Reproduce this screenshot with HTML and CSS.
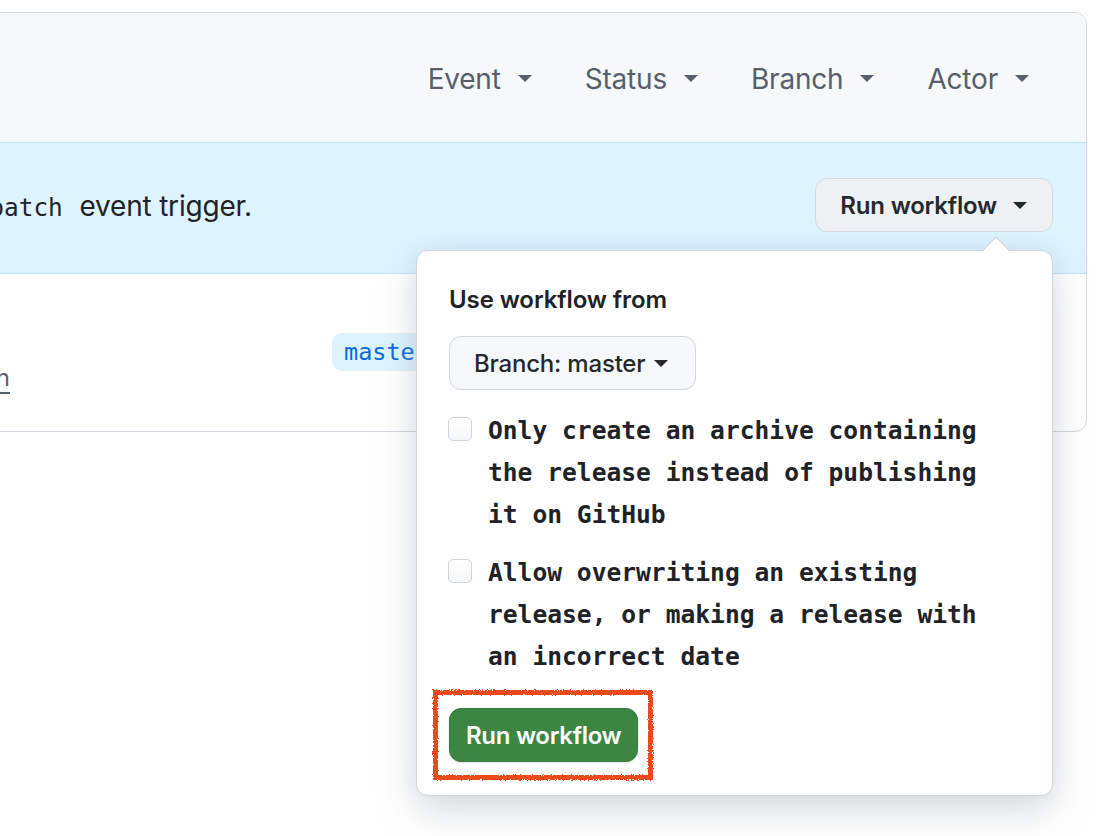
FILE: index.html
```html
<!DOCTYPE html>
<html lang="en">
<head>
<meta charset="utf-8">
<title>Run workflow</title>
<link rel="stylesheet" href="styles.css">
</head>
<body>
<div class="page">
  <div class="box">
    <div class="box-header">
      <div class="filter">Event <span class="caret"></span></div>
      <div class="filter">Status <span class="caret"></span></div>
      <div class="filter">Branch <span class="caret"></span></div>
      <div class="filter">Actor <span class="caret"></span></div>
    </div>
    <div class="banner">
      <div class="banner-msg">
        <span class="banner-text">This workflow has a <code class="code">workflow_dispatch</code> event trigger.</span>
      </div>
      <button class="btn btn-run">Run workflow <span class="caret caret-dark"></span></button>
    </div>
    <div class="run-row">
      <div class="run-left">
        <div class="run-title">Publish release</div>
        <div class="run-meta"><span class="run-link">Manually run by admin</span></div>
      </div>
      <span class="branch-tag">master</span>
    </div>
  </div>

  <div class="popover">
    <div class="pop-title">Use workflow from</div>
    <button class="btn btn-branch">Branch: master <span class="caret caret-dark"></span></button>
    <label class="check-item">
      <span class="checkbox"></span>
      <span class="check-label">Only create an archive containing the release instead of publishing it on GitHub</span>
    </label>
    <label class="check-item">
      <span class="checkbox"></span>
      <span class="check-label">Allow overwriting an existing release, or making a release with an incorrect date</span>
    </label>
    <button class="btn btn-primary">Run workflow</button>
  </div>

  <svg class="highlight" width="230" height="100" viewBox="0 0 230 100" aria-hidden="true">
    <defs>
      <filter id="rough" x="-10%" y="-10%" width="120%" height="120%">
        <feTurbulence type="fractalNoise" baseFrequency="0.9" numOctaves="2" seed="3" result="n"/>
        <feDisplacementMap in="SourceGraphic" in2="n" scale="3.5"/>
      </filter>
    </defs>
    <rect x="7.5" y="7.5" width="215" height="85" fill="none" stroke="#ec4a1c" stroke-width="5" filter="url(#rough)"/>
  </svg>
</div>
</body>
</html>
```

FILE: styles.css
```css
* { box-sizing: border-box; }

html, body {
  margin: 0;
  padding: 0;
  background: #ffffff;
  overflow: hidden;
}

body {
  font-family: Inter, "Noto Sans", "Liberation Sans", sans-serif;
  color: #1f2328;
  width: 1120px;
  height: 836px;
}

.page {
  position: relative;
  width: 1120px;
  height: 836px;
  padding-top: 12px;
}

.box {
  margin-left: -20px;
  width: 1107px;
  border: 1px solid #d0d7de;
  border-radius: 12px;
  background: #ffffff;
}

.box-header {
  height: 129px;
  background: #f6f8fa;
  border-radius: 11px 11px 0 0;
  display: flex;
  justify-content: flex-end;
  align-items: center;
  gap: 53px;
  padding: 2px 57px 0 0;
}

.filter {
  display: flex;
  align-items: center;
  gap: 17px;
  font-size: 28px;
  color: #57606a;
  letter-spacing: -0.2px;
}

.caret {
  display: inline-block;
  width: 0;
  height: 0;
  border-top: 7px solid #57606a;
  border-left: 7px solid transparent;
  border-right: 7px solid transparent;
}

.caret-dark { border-top-color: #24292f; }

.banner {
  height: 132px;
  background: #ddf4ff;
  border-top: 1px solid #b6e3ff;
  border-bottom: 1px solid #b6e3ff;
  display: flex;
  justify-content: space-between;
  align-items: flex-start;
  padding: 35px 33px 0 0;
}

.banner-msg {
  width: 271px;
  flex: 0 0 auto;
  display: flex;
  justify-content: flex-end;
  padding-top: 11px;
}

.banner-text {
  white-space: nowrap;
  font-size: 28px;
  color: #1f2328;
  flex: 0 0 auto;
  letter-spacing: -0.2px;
}

.code {
  font-family: "DejaVu Sans Mono", "Liberation Mono", monospace;
  font-size: 24.4px;
  padding: 0 9px 0 6px;
  letter-spacing: 0;
}

.btn {
  font-family: Inter, "Noto Sans", "Liberation Sans", sans-serif;
  display: inline-flex;
  align-items: center;
  height: 54px;
  border-radius: 12px;
  font-size: 24px;
  font-weight: 600;
  letter-spacing: -0.2px;
  cursor: pointer;
}

.btn-run {
  background: #eef1f4;
  border: 1.5px solid #d3d9df;
  color: #24292f;
  padding: 0 25px 0 24px;
  gap: 16px;
}

.run-row {
  height: 157px;
  display: flex;
  align-items: flex-start;
  border-radius: 0 0 11px 11px;
}

.run-left {
  width: 29px;
  flex: 0 0 auto;
  display: flex;
  flex-direction: column;
  align-items: flex-end;
  padding-top: 48px;
}

.run-title {
  white-space: nowrap;
  font-size: 27px;
  font-weight: 600;
  color: transparent;
  line-height: 40px;
  margin-right: 400px;
}

.run-meta {
  white-space: nowrap;
  font-size: 24px;
  color: #57606a;
  line-height: 32px;
}

.run-link {
  text-decoration: underline;
  text-underline-offset: 6px;
}

.branch-tag {
  margin-left: 322px;
  margin-top: 59px;
  height: 38px;
  line-height: 38px;
  padding: 0 12px;
  border-radius: 10px;
  background: #ddf4ff;
  color: #0969da;
  font-family: "DejaVu Sans Mono", "Liberation Mono", monospace;
  font-size: 23.5px;
}

.popover {
  position: absolute;
  left: 416px;
  top: 250px;
  width: 637px;
  background: #ffffff;
  border: 1px solid #d0d7de;
  border-radius: 12px;
  box-shadow: 0 16px 40px rgba(140, 149, 159, 0.32), 0 0 18px rgba(140, 149, 159, 0.12);
  padding: 31px 32px 33px 32px;
  display: flex;
  flex-direction: column;
  align-items: flex-start;
}

.popover::before,
.popover::after {
  content: "";
  position: absolute;
  width: 0;
  height: 0;
  border-left: 14px solid transparent;
  border-right: 14px solid transparent;
}

.popover::before {
  left: 565px;
  top: -15px;
  border-bottom: 14px solid #d0d7de;
}

.popover::after {
  left: 566px;
  top: -13px;
  border-left-width: 13px;
  border-right-width: 13px;
  border-bottom: 13px solid #ffffff;
}

.pop-title {
  font-size: 24px;
  font-weight: 600;
  line-height: 36px;
  letter-spacing: -0.1px;
  color: #1f2328;
  margin-bottom: 18px;
}

.btn-branch {
  background: #f6f8fa;
  border: 1.5px solid #d0d7de;
  color: #24292f;
  font-weight: 500;
  padding: 0 27px 0 24px;
  gap: 9px;
  margin-bottom: 20px;
}

.check-item {
  display: flex;
  align-items: flex-start;
  gap: 16px;
  margin-bottom: 16px;
}

.check-item + .check-item { margin-bottom: 30px; }

.checkbox {
  flex: 0 0 auto;
  width: 24px;
  height: 24px;
  margin-top: 7px;
  margin-left: -1px;
  border: 1.5px solid #cfd4da;
  border-radius: 5px;
  background: linear-gradient(#ffffff, #f6f7f8);
}

.check-label {
  width: 510px;
  font-family: "DejaVu Sans Mono", "Liberation Mono", monospace;
  font-weight: 700;
  font-size: 24.6px;
  line-height: 42px;
  color: #1f2328;
}

.btn-primary {
  background: #3b8642;
  border: 1px solid #347a3b;
  color: #ffffff;
  padding: 0 16px;
  letter-spacing: -0.3px;
  box-shadow: 0 1px 2px rgba(27, 31, 36, 0.12);
}

.highlight {
  position: absolute;
  left: 428px;
  top: 685px;
}
```
